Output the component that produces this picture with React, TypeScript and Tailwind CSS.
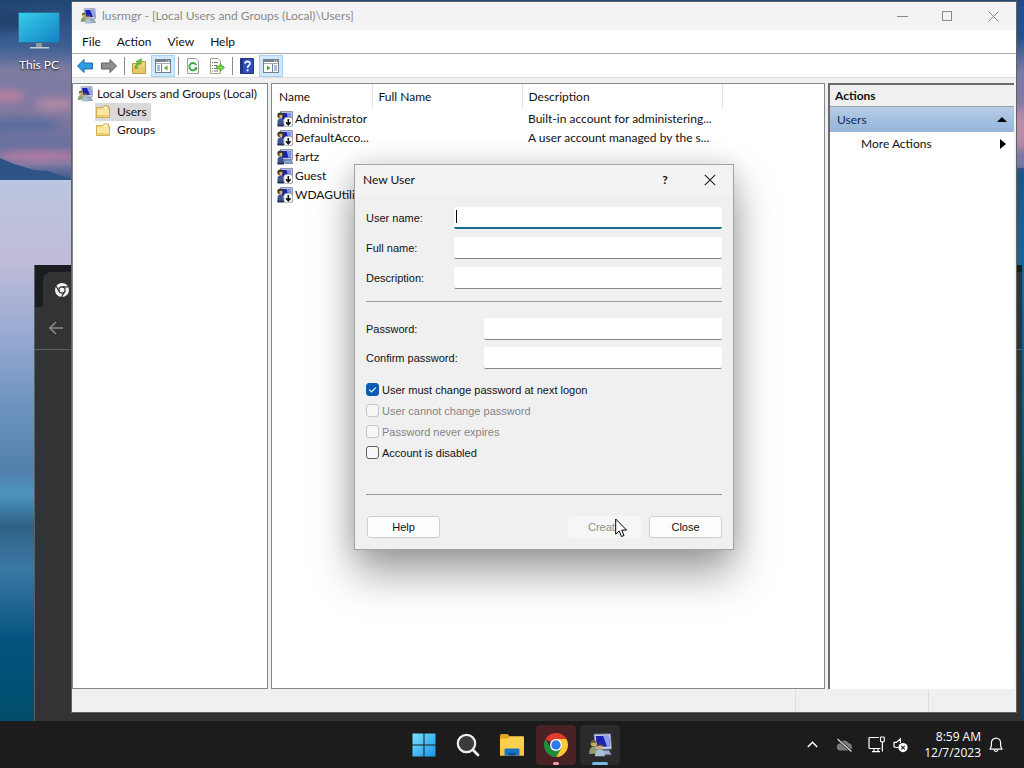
import type { ReactNode } from "react";

const uiFont = "font-['Lato','Open_Sans',sans-serif]";
const dialogFont = "font-['Liberation_Sans',Arial,sans-serif]";

const users = [
  { name: "Administrator", description: "Built-in account for administering...", disabled: true },
  { name: "DefaultAcco...", description: "A user account managed by the s...", disabled: true },
  { name: "fartz", description: "", disabled: false },
  { name: "Guest", description: "", disabled: true },
  { name: "WDAGUtility...", description: "", disabled: true },
];

function Wallpaper() {
  return (
    <svg className="absolute inset-0 h-full w-full" viewBox="0 0 1024 721" preserveAspectRatio="none" aria-hidden="true">
      <defs>
        <linearGradient id="sky" x1="0" y1="0" x2="0" y2="1">
          <stop offset="0" stopColor="#1f4573" />
          <stop offset="0.25" stopColor="#3c5f92" />
          <stop offset="0.4" stopColor="#7a7ba6" />
          <stop offset="0.62" stopColor="#83799f" />
          <stop offset="0.8" stopColor="#69709f" />
          <stop offset="0.9" stopColor="#7c7aa5" />
          <stop offset="1" stopColor="#2f5183" />
        </linearGradient>
        <linearGradient id="lake" x1="0" y1="0" x2="0" y2="1">
          <stop offset="0" stopColor="#bcc6e0" />
          <stop offset="0.15" stopColor="#bfbcd8" />
          <stop offset="0.28" stopColor="#9aaad2" />
          <stop offset="0.42" stopColor="#6c93c0" />
          <stop offset="0.54" stopColor="#527fac" />
          <stop offset="0.58" stopColor="#4b95bd" />
          <stop offset="0.64" stopColor="#2f6288" />
          <stop offset="0.72" stopColor="#3a78a4" />
          <stop offset="0.85" stopColor="#04547f" />
          <stop offset="1" stopColor="#004d6b" />
        </linearGradient>
        <linearGradient id="shore" x1="0" y1="0" x2="0" y2="1">
          <stop offset="0" stopColor="#1e5585" />
          <stop offset="0.2" stopColor="#1d6796" />
          <stop offset="0.6" stopColor="#0c5468" />
          <stop offset="1" stopColor="#0c3f6d" />
        </linearGradient>
        <filter id="soft" x="-50%" y="-50%" width="200%" height="200%">
          <feGaussianBlur stdDeviation="4" />
        </filter>
      </defs>
      <rect width="1024" height="182" fill="url(#sky)" />
      <g filter="url(#soft)">
        <ellipse cx="4" cy="20" rx="30" ry="10" fill="#23436f" />
        <ellipse cx="50" cy="72" rx="60" ry="7" fill="#7f7d9f" />
        <ellipse cx="8" cy="96" rx="16" ry="5" fill="#c782a2" />
        <ellipse cx="55" cy="104" rx="20" ry="6" fill="#b48aa8" />
        <ellipse cx="20" cy="125" rx="40" ry="7" fill="#596c9c" />
        <ellipse cx="40" cy="156" rx="44" ry="4" fill="#c67d9f" />
        <ellipse cx="1020" cy="20" rx="12" ry="22" fill="#24508c" />
        <ellipse cx="1020" cy="130" rx="12" ry="22" fill="#b98ba8" />
      </g>
      <path d="M0 158 L14 164 L34 170 L48 171 L72 180 L1024 168 V182 H0Z" fill="#2d5387" />
      <rect y="180" width="900" height="541" fill="url(#lake)" />
      <rect x="900" y="172" width="124" height="549" fill="url(#shore)" />
    </svg>
  );
}

// the MMC "computer with people" icon
function ComputerUsers({ size = 16 }: { size?: number }) {
  return (
    <svg width={size} height={size} viewBox="0 0 16 16" className="shrink-0" aria-hidden="true">
      <path d="M4 0.8 15 0.6 15.6 10.6 5 11Z" fill="#d3d8e6" stroke="#7a80a0" strokeWidth="0.6" />
      <path d="M5.2 2 14 1.8 14.5 9 5.8 9.3Z" fill="#1a22b0" />
      <path d="M10 1.9 14 1.8 14.5 9 12.8 9.1Z" fill="#8d9fee" />
      <path d="M8 11.5H14L15.5 14.5H9Z" fill="#9fb0c8" stroke="#5d6c88" strokeWidth="0.5" />
      <circle cx="3.8" cy="7" r="2" fill="#c9ac6c" />
      <path d="M1.8 7Q1.8 4.6 4 4.8 5.8 5 5.6 6.4L3 6.6Z" fill="#6a5a2e" />
      <path d="M0.8 14Q0.6 9.3 3.8 9Q6.4 9 6.8 13.6Z" fill="#8fa06a" />
      <circle cx="8" cy="9" r="1.9" fill="#d0a878" />
      <path d="M6.1 9Q6.2 6.8 8.4 7Q10 7.4 9.8 8.6L7.4 8.4Z" fill="#413d3a" />
      <path d="M4.6 15.5Q4.8 11 8 10.8Q11.2 11 11.4 15.5Z" fill="#a9c2d2" />
    </svg>
  );
}

function UserIcon({ down }: { down: boolean }) {
  return (
    <svg width="16" height="16" viewBox="0 0 16 16" className="shrink-0" aria-hidden="true">
      <path d="M3.5 0.6H15.4V10.4H3.5Z" fill="#c3c9de" stroke="#6d7391" strokeWidth="0.8" />
      <path d="M5 2H14V8.8H5Z" fill="#1a22a8" />
      <path d="M9.5 2H14V8.8H11.5Z" fill="#7f91e8" />
      <path d="M7 11.2H14.5L15.6 14.4H8Z" fill="#8ca4d6" stroke="#445a8c" strokeWidth="0.7" />
      <circle cx="3.2" cy="4.4" r="2.8" fill="#3f3a22" />
      <path d="M2.2 4.2Q4.6 3 5.6 4.8L4.8 7.4H2.8Z" fill="#d9b45e" />
      <path d="M0.5 15V10.4Q0.8 7.6 3.6 7.6Q6.6 7.8 7.2 15Z" fill="#3d5692" />
      <path d="M0.5 13.6H7V15.5H0.5Z" fill="#222c52" />
      {down && (
        <>
          <rect x="6.8" y="6.2" width="9" height="9.6" rx="3" fill="#fff" stroke="#7a7a86" strokeWidth="0.7" />
          <path d="M11.3 8V13M9 11.2 11.3 13.7 13.6 11.2" fill="none" stroke="#111" strokeWidth="1.6" />
        </>
      )}
    </svg>
  );
}

function Folder() {
  return (
    <svg width="16" height="16" viewBox="0 0 16 16" className="shrink-0" aria-hidden="true">
      <path d="M1.5 3.5H7.5L9 2H13.5V4H14.5V13.5H1.5Z" fill="#f3d983" stroke="#c9a040" strokeWidth="0.8" />
      <path d="M9.5 3H12.5V4.5H9Z" fill="#fff" />
      <path d="M2 5.5H14V13H2Z" fill="#fae7a0" />
      <path d="M2 11H14V13H2Z" fill="#efd070" />
    </svg>
  );
}

function Arrow({ fill, stroke, flip = false }: { fill: string; stroke: string; flip?: boolean }) {
  return (
    <svg width="18" height="16" viewBox="0 0 18 16" aria-hidden="true">
      <path
        d={flip ? "M16.5 8 10 1.5V5H1.5V11H10V14.5Z" : "M1.5 8 8 1.5V5H16.5V11H8V14.5Z"}
        fill={fill}
        stroke={stroke}
        strokeLinejoin="round"
      />
    </svg>
  );
}

function PaneIcon({ right = false }: { right?: boolean }) {
  return (
    <svg width="16" height="14" viewBox="0 0 16 14" aria-hidden="true">
      <rect x="0.5" y="0.5" width="15" height="13" fill="#fff" stroke="#75808c" />
      <path d="M1 2H15" stroke="#75808c" strokeWidth="2" />
      <path d="M11 2H14" stroke="#fff" strokeDasharray="1 1" />
      <path d="M1 4.5H15" stroke="#a3abb5" />
      <path d={right ? "M9.5 5V13" : "M6.5 5V13"} stroke="#75808c" />
      <path d={right ? "M11 7H14M11 9H14M11 11H14" : "M2 7H5M2 9H5M2 11H5"} stroke="#4f7fb5" />
      <path d={right ? "M4 6.5 7.5 9 4 11.5Z" : "M12.5 6.5 9 9 12.5 11.5Z"} fill="#5aa82a" />
    </svg>
  );
}

function UpFolderIcon() {
  return (
    <svg width="16" height="16" viewBox="0 0 16 16" aria-hidden="true">
      <path d="M1.5 5.5H9L10.5 3.5H14.5V15.5H1.5Z" fill="#f0d27a" stroke="#b99a48" />
      <path d="M2 9H14V15H2Z" fill="#e9c766" />
      <path d="M4 10.5Q4 7.5 6.5 5L5 3.5 10.5 0.8 9.8 6.5 8.2 5.6Q6 7.8 6 10.5Z" fill="#6cc93a" stroke="#3f8f20" strokeWidth="0.6" />
    </svg>
  );
}

function RefreshIcon() {
  return (
    <svg width="16" height="16" viewBox="0 0 16 16" aria-hidden="true">
      <path d="M2.5 0.5H11L13.5 3V15.5H2.5Z" fill="#fbfcfb" stroke="#9aa09c" />
      <path d="M11.2 7A3.6 3.6 0 1 0 11.4 9.8" fill="none" stroke="#3fa53f" strokeWidth="1.8" />
      <path d="M12.6 9.2 9 9.4 11.4 12.6Z" fill="#3fa53f" />
    </svg>
  );
}

function ExportIcon() {
  return (
    <svg width="16" height="16" viewBox="0 0 16 16" aria-hidden="true">
      <path d="M1.5 0.5H9L11.5 3V15.5H1.5Z" fill="#fffdf2" stroke="#a9a48c" />
      <path d="M3 4.5H9M3 7.5H8M3 10.5H8M3 13H9" stroke="#6a6f7a" strokeDasharray="1 1 5 0" />
      <path d="M7.5 8H11V5.5L15.5 9.5 11 13.5V11H7.5Z" fill="#7ed04a" stroke="#45962a" strokeWidth="0.7" />
    </svg>
  );
}

function HelpIcon() {
  return (
    <svg width="14" height="16" viewBox="0 0 14 16" aria-hidden="true">
      <path d="M0.5 0.5H13.5V15.5H0.5Z" fill="#2f4fb8" stroke="#23357d" />
      <path d="M1 1H3V15H1Z" fill="#1e3590" />
      <path d="M5 5.6Q5.2 3.4 7.6 3.4Q10 3.5 10 5.6Q10 6.8 8.6 7.7Q7.6 8.4 7.6 10" fill="none" stroke="#fff" strokeWidth="1.6" />
      <circle cx="7.6" cy="12.3" r="1.1" fill="#fff" />
    </svg>
  );
}

function ToolButton({ label, active = false, children }: { label: string; active?: boolean; children: ReactNode }) {
  return (
    <button
      type="button"
      aria-label={label}
      className={
        active
          ? "flex h-[22px] w-6 items-center justify-center border border-[#a5d3f3] bg-[#cfe8fa]"
          : "flex h-[22px] w-6 items-center justify-center"
      }
    >
      {children}
    </button>
  );
}

function ToolSeparator() {
  return (
    <span className="flex h-[22px] w-1.5 items-center justify-center">
      <span className="h-[18px] w-px bg-[#8a8a8a]" />
    </span>
  );
}

function ChromeWindow() {
  return (
    <div className="absolute top-[265px] right-0.5 bottom-0 left-[34px] flex flex-col border-l border-[#5b6064] bg-[#323335]">
      <div className="flex h-[42px] items-end bg-[#1b1c20] pl-2">
        <div className="flex h-[35px] flex-1 items-center rounded-tl-lg bg-[#323335] pl-3">
          <svg width="14" height="14" viewBox="0 0 14 14" aria-hidden="true">
            <circle cx="7" cy="7" r="7" fill="#f4f4f4" />
            <circle cx="7" cy="7" r="3.1" fill="none" stroke="#323335" strokeWidth="1.2" />
            <path d="M7 3.9H13.4M4.3 8.6 1.2 3.2M9.7 8.6 6.5 14" stroke="#323335" strokeWidth="1.2" />
          </svg>
        </div>
      </div>
      <div className="flex h-[43px] items-center border-b border-[#5b6064] pl-3.5">
        <svg width="14" height="14" viewBox="0 0 14 14" aria-hidden="true">
          <path d="M14 7H1.5M7 1 1 7 7 13" fill="none" stroke="#85878a" strokeWidth="1.6" />
        </svg>
      </div>
    </div>
  );
}

function TitleBar() {
  return (
    <header className="flex h-7 shrink-0 items-center bg-[#f3f3f3] pl-2 text-[#8a8a8a]">
      <ComputerUsers />
      <h1 className="ml-1.5 flex-1">lusrmgr - [Local Users and Groups (Local)\Users]</h1>
      <button type="button" aria-label="Minimize" className="flex w-[45px] justify-center">
        <svg width="11" height="11" viewBox="0 0 11 11"><path d="M0 5.5H11" stroke="#8a8a8a" /></svg>
      </button>
      <button type="button" aria-label="Maximize" className="flex w-[45px] justify-center">
        <svg width="11" height="11" viewBox="0 0 11 11"><rect x="0.5" y="0.5" width="9" height="9" fill="none" stroke="#8a8a8a" /></svg>
      </button>
      <button type="button" aria-label="Close window" className="flex w-[46px] justify-center">
        <svg width="11" height="11" viewBox="0 0 11 11"><path d="M0.5 0.5 10.5 10.5M10.5 0.5 0.5 10.5" stroke="#8a8a8a" /></svg>
      </button>
    </header>
  );
}

function TreePane() {
  return (
    <nav className="w-[196px] shrink-0 border border-[#828790] bg-white pt-px">
      <div className="flex h-[18px] items-center gap-1 pl-1 whitespace-nowrap">
        <ComputerUsers />
        Local Users and Groups (Local)
      </div>
      <ul>
        <li className="flex h-[18px] pl-[22px]">
          <a href="#users" className="flex items-center gap-1.5 bg-[#d9d9d9] pr-1">
            <Folder />
            Users
          </a>
        </li>
        <li className="flex h-[18px] pl-[22px]">
          <a href="#groups" className="flex items-center gap-1.5 pr-1">
            <Folder />
            Groups
          </a>
        </li>
      </ul>
    </nav>
  );
}

function UserList() {
  return (
    <section className="min-w-0 flex-1 overflow-hidden border border-[#828790] bg-white">
      <table className="w-[450px] table-fixed text-left">
        <thead>
          <tr className="h-[25px]">
            <th className="w-[100px] border-r border-[#e5e5e5] px-[7px] font-normal">Name</th>
            <th className="w-[150px] border-r border-[#e5e5e5] px-1.5 font-normal">Full Name</th>
            <th className="w-[200px] border-r border-[#e5e5e5] px-1.5 font-normal">Description</th>
          </tr>
        </thead>
        <tbody>
          {users.map((u) => (
            <tr key={u.name} className="h-[19px] whitespace-nowrap">
              <td className="pl-[5px]">
                <span className="flex items-center gap-0.5">
                  <UserIcon down={u.disabled} />
                  {u.name}
                </span>
              </td>
              <td />
              <td className="px-1.5">{u.description}</td>
            </tr>
          ))}
        </tbody>
      </table>
    </section>
  );
}

function ActionsPane() {
  return (
    <aside className="mr-0.5 w-[186px] shrink-0 border-t-2 border-l-2 border-[#6b6b6b] bg-white">
      <h2 className="flex h-[22px] items-center border-b border-[#a0a0a0] bg-[#f0f0f0] pl-[5px] font-bold">Actions</h2>
      <button
        type="button"
        className="flex h-[25px] w-full items-center justify-between bg-linear-to-b from-[#b5cce6] to-[#94b5da] pr-[7px] pl-[7px] text-[#0f2b5b]"
      >
        Users
        <svg width="10" height="5" viewBox="0 0 10 5"><path d="M0 5 5 0 10 5Z" fill="#000" /></svg>
      </button>
      <button type="button" className="flex h-6 w-full items-center justify-between pr-2 pl-[31px]">
        More Actions
        <svg width="6" height="10" viewBox="0 0 6 10"><path d="M0 0 6 5 0 10Z" fill="#000" /></svg>
      </button>
    </aside>
  );
}

function ManagerWindow() {
  return (
    <main className="absolute top-0.5 right-2 bottom-[9px] left-[72px] flex flex-col bg-[#f0f0f0] shadow-[0_0_0_1px_#5f6266]">
      <TitleBar />
      <div className="flex h-6 shrink-0 items-center border-b border-[#a8a8a8] bg-white">
        <button type="button" className="ml-2.5">File</button>
        <button type="button" className="ml-4">Action</button>
        <button type="button" className="ml-4">View</button>
        <button type="button" className="ml-4">Help</button>
      </div>
      <div className="flex h-6 shrink-0 items-end border-b border-[#dcdcdc] bg-white pl-px">
        <ToolButton label="Back"><Arrow fill="#2f9be0" stroke="#1b6ea8" /></ToolButton>
        <ToolButton label="Forward"><Arrow fill="#8d8d8d" stroke="#5f5f5f" flip /></ToolButton>
        <ToolSeparator />
        <ToolButton label="Up one level"><UpFolderIcon /></ToolButton>
        <ToolButton label="Show console tree" active><PaneIcon /></ToolButton>
        <ToolSeparator />
        <ToolButton label="Refresh"><RefreshIcon /></ToolButton>
        <ToolButton label="Export list"><ExportIcon /></ToolButton>
        <ToolSeparator />
        <ToolButton label="Help topics"><HelpIcon /></ToolButton>
        <ToolButton label="Show action pane" active><PaneIcon right /></ToolButton>
      </div>
      <div className="mt-[5px] flex min-h-0 flex-1 gap-[3px]">
        <TreePane />
        <UserList />
        <ActionsPane />
      </div>
      <footer className="mt-px flex h-[22px] shrink-0">
        <span className="flex-1 border-r border-[#dcdcdc]" />
        <span className="w-[133px] border-r border-[#dcdcdc]" />
        <span className="w-[87px]" />
      </footer>
    </main>
  );
}

function Field({ id, label, type = "text", wide = false, focused = false }: {
  id: string;
  label: string;
  type?: string;
  wide?: boolean;
  focused?: boolean;
}) {
  return (
    <div className="flex h-[22px] items-center">
      <label htmlFor={id} className={wide ? "w-[88px]" : "w-[118px]"}>{label}</label>
      <div className="relative h-full flex-1">
        <input
          id={id}
          type={type}
          className={
            focused
              ? "h-full w-full rounded-xs border-b-2 border-[#1a6b8f] bg-white px-1 caret-transparent outline-none"
              : "h-full w-full rounded-xs border-b border-[#868686] bg-white px-1 outline-none"
          }
        />
        {focused && <span className="absolute top-[3px] left-0.5 h-[13px] w-px bg-black" />}
      </div>
    </div>
  );
}

function CheckOption({ id, label, checked = false, disabled = false }: {
  id: string;
  label: string;
  checked?: boolean;
  disabled?: boolean;
}) {
  return (
    <div className="flex h-[21px] items-center gap-[3px]">
      <span className="relative flex">
        <input
          id={id}
          type="checkbox"
          defaultChecked={checked}
          disabled={disabled}
          className="peer h-[13px] w-[13px] appearance-none rounded-[3px] border border-[#5f5f5f] bg-[#f7f7f7] checked:border-[#0a5cb5] checked:bg-[#0a5cb5] disabled:border-[#c6c6c6]"
        />
        <svg viewBox="0 0 13 13" className="pointer-events-none absolute inset-0 hidden h-[13px] w-[13px] peer-checked:block">
          <path d="M3.2 6.6 5.5 8.9 9.8 4.6" fill="none" stroke="#fff" strokeWidth="1.1" />
        </svg>
      </span>
      <label htmlFor={id} className={disabled ? "text-[#858585]" : ""}>{label}</label>
    </div>
  );
}

function NewUserDialog() {
  return (
    <form
      aria-labelledby="new-user-title"
      className="absolute top-[164px] left-[354px] w-[380px] border border-[#a3a3a3] bg-[#f0f0f0] pb-[11px] shadow-[0_24px_40px_rgba(0,0,0,0.36),0_0_24px_rgba(0,0,0,0.14)]"
    >
      <div className="flex h-[30px] items-center bg-[#f3f3f3] pr-[17px] pl-2">
        <h2 id="new-user-title" className="flex-1">New User</h2>
        <button type="button" aria-label="What's this?" className="w-4 font-bold">?</button>
        <button type="button" aria-label="Close dialog" className="ml-[31px]">
          <svg width="12" height="12" viewBox="0 0 12 12"><path d="M0.8 0.8 11.2 11.2M11.2 0.8 0.8 11.2" stroke="#222" strokeWidth="1.1" /></svg>
        </button>
      </div>
      <div className={`${dialogFont} px-[11px] pt-3 text-[11px] leading-[14px]`}>
        <div className="flex flex-col gap-2">
          <Field id="user-name" label="User name:" wide focused />
          <Field id="full-name" label="Full name:" wide />
          <Field id="description" label="Description:" wide />
        </div>
        <hr className="mt-3 border-[#9a9a9a]" />
        <div className="mt-4 flex flex-col gap-[7px]">
          <Field id="password" label="Password:" type="password" />
          <Field id="confirm" label="Confirm password:" type="password" />
        </div>
        <div className="mt-2.5">
          <CheckOption id="must-change" label="User must change password at next logon" checked />
          <CheckOption id="cannot-change" label="User cannot change password" disabled />
          <CheckOption id="never-expires" label="Password never expires" disabled />
          <CheckOption id="account-disabled" label="Account is disabled" />
        </div>
        <hr className="mt-[31px] border-[#9a9a9a]" />
        <div className="mt-[21px] flex gap-2">
          <button type="button" className="mr-auto ml-px h-[22px] w-[73px] rounded-[3px] border border-[#cfcfcf] bg-[#fdfdfd]">Help</button>
          <button type="button" disabled className="h-[22px] w-[73px] rounded-[3px] bg-[#f6f6f6] text-[#8d8d8d]">Create</button>
          <button type="button" className="h-[22px] w-[73px] rounded-[3px] border border-[#cfcfcf] bg-[#fdfdfd]">Close</button>
        </div>
      </div>
    </form>
  );
}

function Taskbar() {
  return (
    <footer className="grid h-[47px] shrink-0 grid-cols-[1fr_auto_1fr] items-center bg-[#1c1c1c] text-white">
      <span />
      <div className="flex gap-1">
        <button type="button" aria-label="Start" className="flex h-10 w-10 items-center justify-center">
          <svg width="24" height="24" viewBox="0 0 24 24">
            <defs>
              <linearGradient id="win" x1="0" y1="0" x2="1" y2="1">
                <stop offset="0" stopColor="#7be3ff" />
                <stop offset="1" stopColor="#1493e8" />
              </linearGradient>
            </defs>
            <path d="M0.5 0.5H11.5V11.5H0.5ZM12.5 0.5H23.5V11.5H12.5ZM0.5 12.5H11.5V23.5H0.5ZM12.5 12.5H23.5V23.5H12.5Z" fill="url(#win)" />
          </svg>
        </button>
        <button type="button" aria-label="Search" className="flex h-10 w-10 items-center justify-center">
          <svg width="24" height="24" viewBox="0 0 24 24">
            <circle cx="10.5" cy="10.5" r="8.7" fill="#3b3b3b" stroke="#eee" strokeWidth="2.2" />
            <path d="M17 17 22 22" stroke="#eee" strokeWidth="2.8" strokeLinecap="round" />
          </svg>
        </button>
        <button type="button" aria-label="File Explorer" className="flex h-10 w-10 items-center justify-center">
          <svg width="26" height="24" viewBox="0 0 26 24">
            <path d="M1 2.5Q1 1 2.5 1H8.5L11 3.5V7H1Z" fill="#e0a420" />
            <path d="M1 5.5H9L11 3.2H24Q25 3.2 25 4.4V22.5H1Z" fill="#fbd04e" />
            <path d="M1 15H25V22.5H1Z" fill="#f7c63c" />
            <path d="M5.5 22.5V17Q5.5 15.5 7 15.5H19Q20.5 15.5 20.5 17V22.5Z" fill="#1673c9" />
            <path d="M9 19.8H17V22.5H9Z" fill="#0f559b" />
          </svg>
        </button>
        <button type="button" aria-label="Google Chrome" className="relative flex h-10 w-10 items-center justify-center rounded bg-[#4a2226]">
          <svg width="24" height="24" viewBox="0 0 24 24">
            <path d="M12 12 1.61 6A12 12 0 0 1 22.39 6Z" fill="#e33b2e" />
            <path d="M12 0A12 12 0 0 1 22.39 6H12Z" fill="#e33b2e" />
            <path d="M22.39 6A12 12 0 0 1 12 24L17.2 15 12 6Z" fill="#fcc934" />
            <path d="M1.61 6A12 12 0 0 0 12 24L17.2 15 12 12 6.8 15Z" fill="#1e8e3e" />
            <circle cx="12" cy="12" r="6" fill="#fff" />
            <circle cx="12" cy="12" r="4.7" fill="#2a7de8" />
          </svg>
          <span className="absolute bottom-0 left-[17px] h-[3px] w-1.5 rounded-full bg-[#f0a0ac]" />
        </button>
        <button type="button" aria-label="lusrmgr" className="relative flex h-10 w-10 items-center justify-center rounded bg-[#2b2b2b]">
          <ComputerUsers size={24} />
          <span className="absolute bottom-0 left-3 h-[3px] w-4 rounded-full bg-[#76b9e0]" />
        </button>
      </div>
      <div className="flex items-center justify-end pr-[21px]">
        <button type="button" aria-label="Show hidden icons" className="mr-[18px]">
          <svg width="11" height="7" viewBox="0 0 11 7"><path d="M0.8 6 5.5 1.3 10.2 6" fill="none" stroke="#fff" strokeWidth="1.5" /></svg>
        </button>
        <svg width="17" height="14" viewBox="0 0 17 14" className="mr-[15px]" aria-hidden="true">
          <path d="M4 12.5A3.5 3.5 0 0 1 3.6 5.6 5 5 0 0 1 12.6 5.2 3.7 3.7 0 0 1 13 12.5Z" fill="#7c7c7c" />
          <path d="M1.5 1 15.5 13.5" stroke="#1c1c1c" strokeWidth="2.6" />
          <path d="M1.5 1 15.5 13.5" stroke="#ddd" strokeWidth="1.2" />
        </svg>
        <svg width="17" height="17" viewBox="0 0 17 17" className="mr-2" aria-hidden="true">
          <path d="M11 1.5H2Q1 1.5 1 2.5V11.5Q1 12.5 2 12.5H12.5M4 15.7H12M6 12.5V15.5M10 12.5V15.5" fill="none" stroke="#fff" strokeWidth="1.2" />
          <rect x="12.5" y="1" width="3.8" height="4.8" rx="0.8" fill="none" stroke="#fff" strokeWidth="1.1" />
          <path d="M14.4 6V15.5" stroke="#fff" strokeWidth="1.2" />
        </svg>
        <svg width="15" height="16" viewBox="0 0 15 16" className="mr-4" aria-hidden="true">
          <path d="M5.5 10.5H3.6L1 9.8V5.4H3.4L7.4 1.8V6" fill="none" stroke="#fff" strokeWidth="1.2" />
          <circle cx="10" cy="10.6" r="4.6" fill="#fff" />
          <path d="M8.2 8.8 11.8 12.4M11.8 8.8 8.2 12.4" stroke="#1c1c1c" strokeWidth="1.1" />
        </svg>
        <div className="mr-2 text-right font-['Open_Sans','Noto_Sans',sans-serif] leading-4">
          <p>8:59 AM</p>
          <p>12/7/2023</p>
        </div>
        <button type="button" aria-label="Notifications">
          <svg width="14" height="16" viewBox="0 0 14 16">
            <path d="M7 1.2A4.6 4.6 0 0 0 2.4 5.8V9L1 12.2H13L11.6 9V5.8A4.6 4.6 0 0 0 7 1.2Z" fill="none" stroke="#fff" strokeWidth="1.2" strokeLinejoin="round" />
            <path d="M5.2 12.6A1.8 1.8 0 0 0 8.8 12.6" fill="none" stroke="#fff" strokeWidth="1.2" />
          </svg>
        </button>
      </div>
    </footer>
  );
}

export default function App() {
  return (
    <div className={`${uiFont} flex h-screen flex-col overflow-hidden text-xs text-[#111]`}>
      <div className="relative flex-1 overflow-hidden">
        <Wallpaper />
        <a href="#this-pc" className="absolute top-3 left-[17px] flex w-11 flex-col items-center gap-2 whitespace-nowrap text-white [text-shadow:0_1px_2px_#000]">
          <svg width="42" height="37" viewBox="0 0 42 37" aria-hidden="true">
            <defs>
              <linearGradient id="screen" x1="0" y1="0" x2="1" y2="1">
                <stop offset="0" stopColor="#36d0ea" />
                <stop offset="1" stopColor="#127fc4" />
              </linearGradient>
            </defs>
            <path d="M18 30H24V35H18Z" fill="#8f9aa3" />
            <path d="M12 35H31V36.5H12Z" fill="#c5ccd2" />
            <rect x="0.5" y="0.5" width="41" height="30" rx="1" fill="url(#screen)" stroke="#2c6d92" />
          </svg>
          This PC
        </a>
        <ChromeWindow />
        <ManagerWindow />
        <NewUserDialog />
        <svg width="13" height="20" viewBox="0 0 13 20" className="absolute top-[518px] left-[615px]" aria-hidden="true">
          <path d="M0.7 1V16.2L4.2 13 6.5 18.6 9 17.5 6.7 12.1H11.6Z" fill="#fff" stroke="#000" />
        </svg>
      </div>
      <Taskbar />
    </div>
  );
}
